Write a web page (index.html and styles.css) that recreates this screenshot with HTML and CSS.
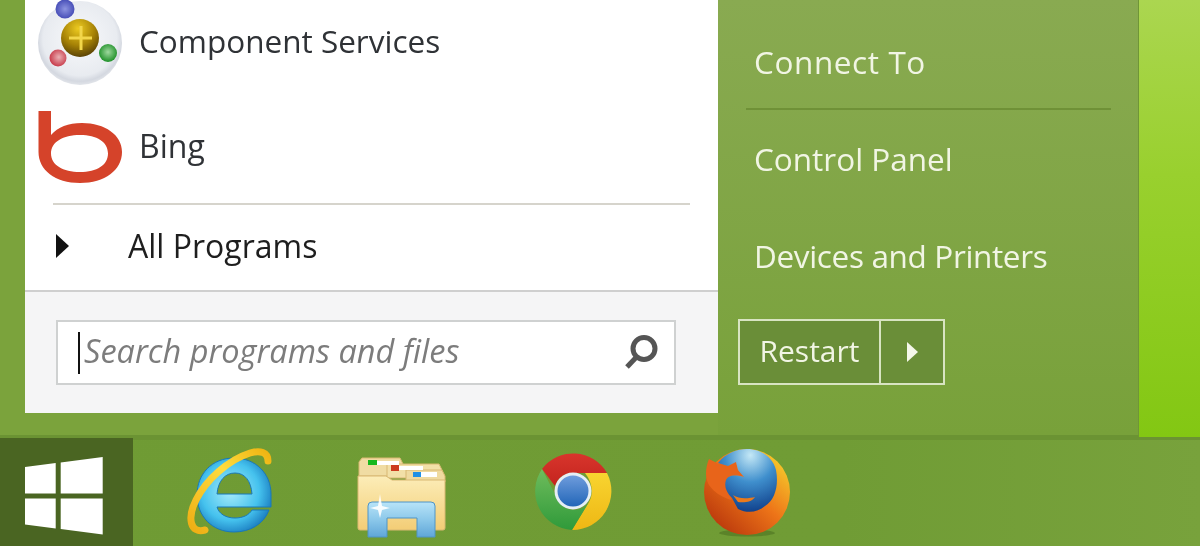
FILE: index.html
```html
<!DOCTYPE html>
<html lang="en">
<head>
<meta charset="utf-8">
<title>Start menu</title>
<link rel="stylesheet" href="styles.css">
</head>
<body>
<div class="desktop">
  <div class="upper">
    <div class="menu">
      <div class="programs">
        <div class="app app-first">
          <svg class="app-icon" viewBox="30 0 100 94" width="100" height="94" aria-hidden="true">
            <defs>
              <radialGradient id="disc" cx=".5" cy=".45" r=".55"><stop offset="0" stop-color="#f8f9fb"/><stop offset=".8" stop-color="#e8ebf0"/><stop offset=".92" stop-color="#d4d8e0"/><stop offset="1" stop-color="#e2e5ea"/></radialGradient>
              <radialGradient id="gold" cx=".45" cy=".25" r=".8"><stop offset="0" stop-color="#ecca20"/><stop offset=".55" stop-color="#a68206"/><stop offset="1" stop-color="#4f3905"/></radialGradient>
              <radialGradient id="blueb" cx=".5" cy=".5" r=".55"><stop offset="0" stop-color="#8d94e0"/><stop offset="1" stop-color="#4148b4"/></radialGradient>
              <radialGradient id="redb" cx=".55" cy=".45" r=".55"><stop offset="0" stop-color="#eab0b4"/><stop offset="1" stop-color="#c83c4c"/></radialGradient>
              <radialGradient id="greenb" cx=".5" cy=".45" r=".55"><stop offset="0" stop-color="#9ed89e"/><stop offset="1" stop-color="#1e9028"/></radialGradient>
            </defs>
            <circle cx="80" cy="43" r="42" fill="url(#disc)"/>
            <circle cx="80" cy="38" r="19" fill="url(#gold)"/>
            <path d="M81 26v24M69 38h23" stroke="#f2d64a" stroke-width="3" fill="none"/>
            <circle cx="65" cy="9" r="9.500" fill="url(#blueb)"/>
            <circle cx="58" cy="58" r="8.500" fill="url(#redb)"/>
            <circle cx="108" cy="53" r="9" fill="url(#greenb)"/>
          </svg>
          <span class="app-name">Component Services</span>
        </div>
        <div class="app app-second">
          <svg class="app-icon" viewBox="30 100 100 94" width="100" height="94" aria-hidden="true">
            <path fill-rule="evenodd" d="M38.500 111H51V135C58 127 68 123 82 123C105 123 122 135 122 152C122 170 105 183 80 183C55 183 38.500 170 38.500 152ZM80 135C63 135 51 142 51 153.500C51 165 63 172 80 172C97 172 108 165 108 153.500C108 142 97 135 80 135Z" fill="#d5432a"/>
          </svg>
          <span class="app-name app-name-short">Bing</span>
        </div>
      </div>
      <div class="all-wrap">
        <div class="all">
          <svg class="tri" viewBox="0 0 14 26" width="14" height="26" aria-hidden="true"><path d="M1 1l13 12L1 25z" fill="#111"/></svg>
          <span class="all-label">All Programs</span>
        </div>
      </div>
      <div class="search-area">
        <div class="search">
          <span class="caret"></span>
          <span class="placeholder">Search programs and files</span>
          <svg class="glass" viewBox="0 0 38 38" width="38" height="38" aria-hidden="true"><circle cx="23" cy="14.500" r="11" fill="none" stroke="#555" stroke-width="5"/><path d="M15.500 23L6 33" stroke="#555" stroke-width="5"/></svg>
        </div>
      </div>
    </div>
    <div class="panel">
      <div class="links">
        <div class="link link-top"><span class="label label-wide">Connect To</span></div>
        <div class="link"><span class="label">Control Panel</span></div>
        <div class="link"><span class="label label-tight">Devices and Printers</span></div>
      </div>
      <div class="power">
        <span class="restart"><span class="label">Restart</span></span>
        <span class="more"><svg viewBox="0 0 11 20" width="11" height="20" aria-hidden="true"><path d="M0 0l11 10L0 20z" fill="#f4f7ea"/></svg></span>
      </div>
    </div>
    <div class="wallpaper"></div>
  </div>
  <div class="taskbar">
    <div class="start">
      <svg viewBox="25 457 78 78" width="78" height="78" aria-hidden="true">
        <path d="M25 467l30.700-4v30.500H25zM60.700 462.500l42-5.500v36.500h-42zM25 498.500h30.700v30L25 524.500zM60.700 498.500h42v36l-42-5.500z" fill="#fff"/>
      </svg>
    </div>
    <div class="pins">
      <svg viewBox="186 448 90 90" width="90" height="90" aria-hidden="true">
        <defs>
          <radialGradient id="iee" cx=".45" cy=".45" r=".6"><stop offset="0" stop-color="#a8ecfb"/><stop offset=".65" stop-color="#45c2ee"/><stop offset="1" stop-color="#1a7cc0"/></radialGradient>
          <linearGradient id="ier" x1="0" y1="1" x2="1" y2="0"><stop offset="0" stop-color="#eeae14"/><stop offset=".6" stop-color="#ffdc3e"/><stop offset="1" stop-color="#eeb412"/></linearGradient>
        </defs>
        <path fill-rule="evenodd" d="M234 458C256 458 271 474 271 494V507H217C219 514 226 518 235 518C243 518 249 515 252 510H269C264 524 250 532 234 532C212 532 197 516 197 495C197 474 212 458 234 458ZM217 494H252C251 481 245 473 235 473C225 473 218 481 217 494Z" fill="url(#iee)" stroke="#1a78b8" stroke-width="1"/>
        <path d="M205 530C190 534 187 518 196 500C206 480 228 460 250 453C260 450 268 452 268 461" fill="none" stroke="url(#ier)" stroke-width="7" stroke-linecap="round"/>
      </svg>
      <svg viewBox="356 448 90 90" width="90" height="90" aria-hidden="true">
        <defs>
          <linearGradient id="fold" x1="0" y1="0" x2="0" y2="1"><stop offset="0" stop-color="#fcedb8"/><stop offset="1" stop-color="#f3cd76"/></linearGradient>
          <linearGradient id="stand" x1="0" y1="0" x2="0" y2="1"><stop offset="0" stop-color="#b8e4f8"/><stop offset=".5" stop-color="#8cc8ea"/><stop offset="1" stop-color="#5fa6d8"/></linearGradient>
        </defs>
        <path d="M362 458h38l3 6v12h-44v-14z" fill="#f0dca3" stroke="#d9b873"/>
        <path d="M387 464h52l3 6v8h-55z" fill="#f2e0a8" stroke="#d9b873"/>
        <path d="M406 470h36l3 6v6h-39z" fill="#efdaa0" stroke="#d9b873"/>
        <rect x="368" y="460" width="9" height="5" fill="#16b81e"/>
        <rect x="377" y="461" width="22" height="4" fill="#fff"/>
        <rect x="391" y="465" width="8" height="6" fill="#cc3c20"/>
        <rect x="399" y="466" width="24" height="4" fill="#fff"/>
        <rect x="413" y="472" width="8" height="5" fill="#1f90e6"/>
        <rect x="421" y="472" width="16" height="5" fill="#fff"/>
        <path d="M358 476h28l6 4h53v48a2 2 0 0 1-2 2H360a2 2 0 0 1-2-2z" fill="url(#fold)" stroke="#d9b873"/>
        <path d="M368 506a4 4 0 0 1 4-4h59a4 4 0 0 1 4 4v31h-18v-19h-30v19h-19z" fill="url(#stand)" stroke="#4f94c6"/>
        <path d="M380 494l2 12 8 2-8 2-2 8-2-8-8-2 8-2z" fill="#fff" opacity=".9"/>
      </svg>
      <svg viewBox="532 450 84 84" width="84" height="84" aria-hidden="true">
        <defs>
          <linearGradient id="cr" x1="0" y1="0" x2="0" y2="1"><stop offset="0" stop-color="#d8352c"/><stop offset="1" stop-color="#c4241e"/></linearGradient>
          <linearGradient id="cy" x1="0" y1="0" x2="0" y2="1"><stop offset="0" stop-color="#f8d430"/><stop offset="1" stop-color="#eeb714"/></linearGradient>
          <linearGradient id="cg" x1="0" y1="0" x2="0" y2="1"><stop offset="0" stop-color="#6fbc5c"/><stop offset="1" stop-color="#2f9a3a"/></linearGradient>
          <linearGradient id="cb" x1="0" y1="0" x2="0" y2="1"><stop offset="0" stop-color="#6f9cdc"/><stop offset="1" stop-color="#2266b8"/></linearGradient>
        </defs>
        <path d="M542 471a39 39 0 0 1 65 4h-34c-9 0-15 5-18 13z" fill="url(#cr)"/>
        <path d="M607 475a39 39 0 0 1-35 57l17-28c5-9 3-20-4-29z" fill="url(#cy)"/>
        <path d="M542 471a39 39 0 0 0 30 61l17-28c-4 6-9 8-15 8-8 0-15-5-18-14z" fill="url(#cg)"/>
        <circle cx="573" cy="493" r="18.500" fill="#e6eef4"/>
        <circle cx="573" cy="493" r="15.500" fill="url(#cb)"/>
      </svg>
      <svg viewBox="702 448 90 90" width="90" height="90" aria-hidden="true">
        <defs>
          <radialGradient id="fg" cx=".55" cy=".1" r=".95"><stop offset="0" stop-color="#c4e8f6"/><stop offset=".45" stop-color="#3f8fcd"/><stop offset="1" stop-color="#0c3a86"/></radialGradient>
          <linearGradient id="ff" x1=".95" y1=".2" x2=".2" y2="1"><stop offset="0" stop-color="#f6c52a"/><stop offset=".45" stop-color="#ed7418"/><stop offset="1" stop-color="#b8360c"/></linearGradient>
        </defs>
        <ellipse cx="747" cy="533" rx="28" ry="3.500" fill="#4d7322" opacity=".6"/>
        <circle cx="747" cy="492" r="43" fill="url(#ff)"/>
        <path d="M709 459l10 5 9-3 8 1 2 8 6 7c-11-3-16-1-18 3-2 6 0 12 6 18l-1 2c-12-4-25-12-25-26 0-6 1-10 3-15z" fill="#e8641a"/>
        <path d="M718 463C726 453 737 449 747 449C762 449 773 458 776 470C779 485 775 500 765 506C758 512 748 514 738 509L732 498C726 492 724 486 726 480C728 476 733 474 744 477L738 470L736 462L728 466Z" fill="url(#fg)"/>
        <path d="M733 495C740 500 750 498 755 497C752 502 744 503 738 502Z" fill="#ea7a1c"/>
      </svg>
    </div>
  </div>
</div>
</body>
</html>
```
FILE: styles.css
```css
* { box-sizing: border-box; }
html, body { margin: 0; height: 100%; }
body {
  overflow: hidden;
  font-family: "Open Sans", "Noto Sans", sans-serif;
  font-size: 31.5px;
}
.desktop {
  width: 1200px;
  height: 546px;
  display: flex;
  flex-direction: column;
  background: #759f37;
}
.upper {
  height: 437px;
  display: flex;
  padding-left: 25px;
  background: linear-gradient(#7ba33c 435px, #6b9333 435px);
}
.menu {
  width: 693px;
  height: 413px;
  background: #fff;
  display: flex;
  flex-direction: column;
}
.programs { height: 200px; padding-left: 5px; }
.app { display: flex; align-items: center; gap: 9px; color: #2f3236; }
.app-first { height: 94px; }
.app-second { height: 106px; align-items: flex-end; }
.app-name { position: relative; filter: blur(.35px); }
.app-icon { flex: none; filter: blur(.5px); }
.app-first .app-name { top: -7px; }
.app-second .app-icon { margin-bottom: 6px; }
.app-second .app-name { bottom: 33px; }
.app-name-short { font-size: 32px; }
.all-wrap { height: 90px; padding: 3px 28px 0; }
.all {
  height: 87px;
  border-top: 2px solid #d6d4cc;
  display: flex;
  align-items: center;
  gap: 59px;
  padding: 0 0 4px 2px;
  color: #1e1e1e;
}
.all-label { font-size: 32px; filter: blur(.35px); }
.tri { flex: none; }
.search-area {
  flex: 1;
  background: #f5f5f6;
  border-top: 2px solid #cfcfcf;
  padding: 28px 42px 0 31px;
}
.search {
  height: 65px;
  background: #fff;
  border: 2px solid #cfd1d1;
  display: flex;
  align-items: center;
  padding: 0 15px 0 20px;
}
.caret { width: 2px; height: 42px; background: #111; flex: none; }
.placeholder {
  margin-left: 4px;
  padding-bottom: 4px;
  font-size: 32.5px;
  font-style: italic;
  color: #7c7c7c;
  flex: 1;
  filter: blur(.35px);
}
.glass { flex: none; filter: blur(.4px); }
.panel {
  width: 421px;
  height: 437px;
  padding: 0 27px 0 28px;
  display: flex;
  flex-direction: column;
  background: linear-gradient(#89aa51, #78a13a);
  border-bottom: 2px solid #6b9333;
  border-right: 1px solid #6f9636;
  color: #f1f5e4;
}
.links { height: 319px; padding-top: 15px; }
.link { height: 97px; padding: 0 8px; display: flex; align-items: center; }
.link-top { height: 95px; border-bottom: 2px solid #6f9137; }
.label { filter: blur(.35px); }
.label-wide { letter-spacing: .6px; }
.label-tight { letter-spacing: -.35px; }
.power {
  align-self: flex-start;
  margin-left: -8px;
  width: 207px;
  height: 66px;
  display: flex;
  border: 2px solid #d8e4c2;
  background: #6a8e38;
}
.restart {
  width: 141px;
  display: flex;
  align-items: center;
  justify-content: center;
  border-right: 2px solid #d8e4c2;
  font-size: 30px;
  padding-bottom: 4px;
}
.more { flex: 1; display: flex; align-items: center; justify-content: center; }
.wallpaper {
  flex: 1;
  background: linear-gradient(#abd650, #99d02e 40%, #83c713);
}
.taskbar {
  height: 109px;
  display: flex;
  background: linear-gradient(#6b9333 3px, transparent 3px), linear-gradient(90deg, #6f9b34 0%, #709c35 70%, #78a23c 100%);
}
.start {
  width: 133px;
  margin-top: 1px;
  background: #4a6522;
  padding: 19px 0 0 25px;
}
.start svg { display: block; filter: blur(.4px); }
.pins {
  padding: 11px 0 0 53px;
  display: grid;
  grid-template-columns: 170px 176px 170px 90px;
  align-items: start;
}
.pins svg { display: block; filter: blur(.5px); }
```
